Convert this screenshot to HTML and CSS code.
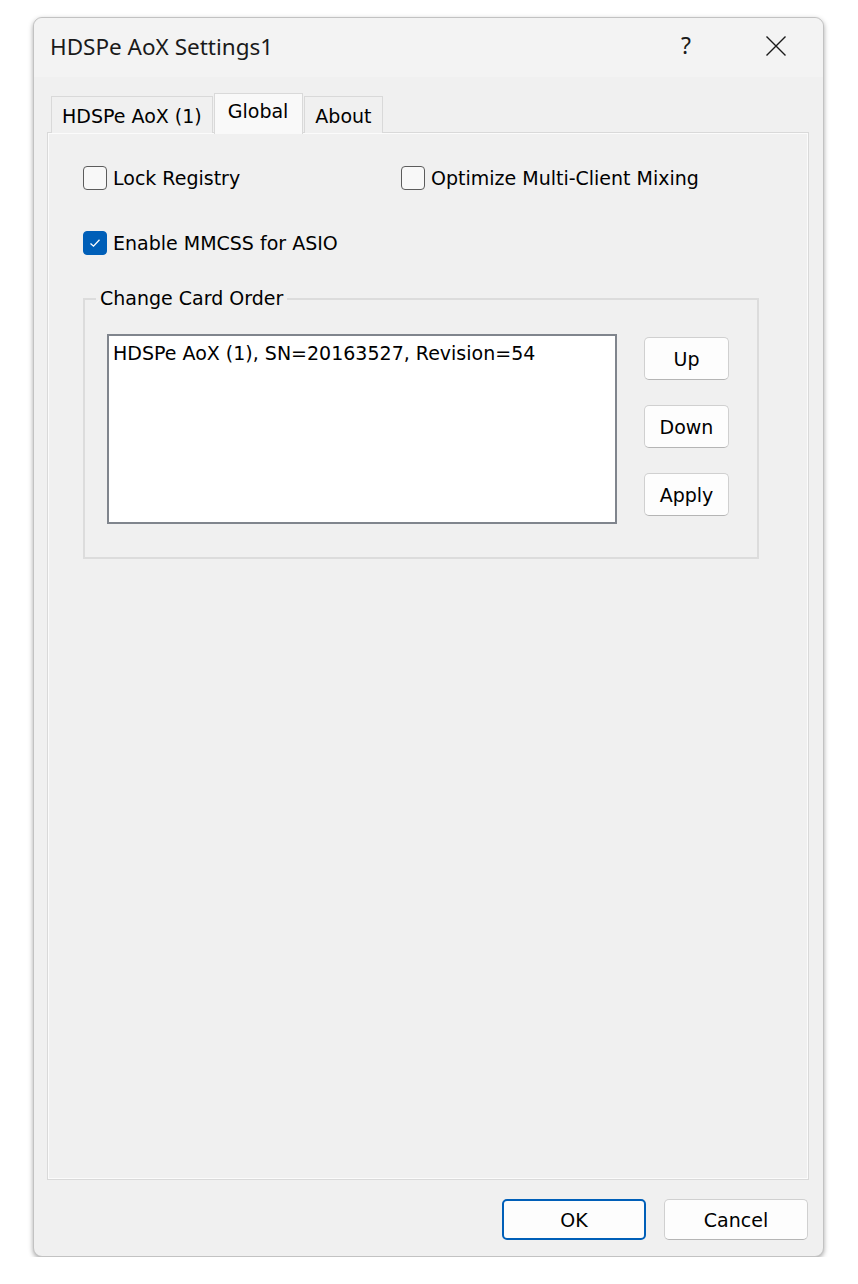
FILE: index.html
```html
<!DOCTYPE html>
<html>
<head>
<meta charset="utf-8">
<title>HDSPe AoX Settings1</title>
<link rel="stylesheet" href="styles.css">
</head>
<body>
<div class="window">
  <div class="titlebar">
    <span class="title">HDSPe AoX Settings1</span>
    <span class="help">?</span>
    <span class="close">
      <svg width="22" height="22" viewBox="0 0 22 22"><path d="M1.5 1.5 L20.5 20.5 M20.5 1.5 L1.5 20.5" stroke="#1a1a1a" stroke-width="1.4" fill="none"/></svg>
    </span>
  </div>
  <div class="content">
    <div class="tabs">
      <div class="tab">HDSPe AoX (1)</div>
      <div class="tab active">Global</div>
      <div class="tab">About</div>
    </div>
    <div class="panel">
      <div class="row row1">
        <label class="check col1"><span class="box"></span><span>Lock Registry</span></label>
        <label class="check"><span class="box"></span><span>Optimize Multi-Client Mixing</span></label>
      </div>
      <div class="row row2">
        <label class="check"><span class="box checked"><svg width="14" height="14" viewBox="0 0 14 14"><path d="M2.5 7.5 L5.5 10.2 L11.5 3.8" stroke="#fff" stroke-width="1.3" fill="none"/></svg></span><span>Enable MMCSS for ASIO</span></label>
      </div>
      <div class="group">
        <span class="legend">Change Card Order</span>
        <div class="group-body">
          <div class="listbox"><div class="item">HDSPe AoX (1), SN=20163527, Revision=54</div></div>
          <div class="side-buttons">
            <button class="btn small">Up</button>
            <button class="btn small">Down</button>
            <button class="btn small">Apply</button>
          </div>
        </div>
      </div>
    </div>
  </div>
  <div class="footer">
    <button class="btn wide default">OK</button>
    <button class="btn wide">Cancel</button>
  </div>
</div>
</body>
</html>
```
FILE: styles.css
```css
html, body {
  margin: 0;
  padding: 0;
  background: #ffffff;
}
body {
  font-family: "DejaVu Sans", "Liberation Sans", sans-serif;
  font-size: 19px;
  color: #000;
}
.window {
  margin: 17px 0 0 33px;
  width: 791px;
  height: 1240px;
  box-sizing: border-box;
  border: 1px solid #c2c2c2;
  border-radius: 9px;
  box-shadow: 0 2px 5px rgba(0,0,0,0.35);
  background: #f0f0f0;
  display: flex;
  flex-direction: column;
}
.titlebar {
  height: 59px;
  flex: none;
  display: flex;
  align-items: center;
  padding-left: 16px;
  background: #f3f3f3;
  border-radius: 9px 9px 0 0;
}
.title {
  font-family: "Noto Sans", "Open Sans", sans-serif;
  font-size: 22.5px;
  color: #1a1a1a;
  flex: 1;
  margin-top: -2px;
}
.help {
  font-family: "Noto Sans", sans-serif;
  font-size: 23px;
  color: #1a1a1a;
  margin-right: 74px;
  margin-top: -6px;
}
.close {
  display: flex;
  margin-right: 36px;
  margin-top: -4px;
}
.content {
  flex: 1;
  display: flex;
  flex-direction: column;
  padding: 16px 14px 0 13px;
}
.tabs {
  display: flex;
  align-items: flex-end;
  padding-left: 4px;
  height: 40px;
  position: relative;
  z-index: 1;
  margin-bottom: -1px;
}
.tab {
  height: 37px;
  box-sizing: border-box;
  border: 1px solid #d9d9d9;
  border-bottom: none;
  background: #f0f0f0;
  padding: 0 10px 0 10px;
  display: flex;
  align-items: center;
  padding-top: 2px;
  color: #000;
}
.tab + .tab { margin-left: 1px; }
.tab.active {
  height: 41px;
  background: #f9f9f9;
  padding-top: 0;
  padding-bottom: 6px;
  padding-left: 13px;
  padding-right: 14px;
  margin-bottom: -1px;
}
.panel {
  flex: 1;
  border: 1px solid #d9d9d9;
  box-shadow: inset 1px 1px 0 #fbfbfb, inset -1px -1px 0 #fbfbfb;
  background: #f0f0f0;
  padding: 32px 50px 0 35px;
  display: flex;
  flex-direction: column;
}
.row {
  display: flex;
  height: 24px;
  align-items: center;
}
.row1 { margin-top: 1px; }
.row2 { margin-top: 41px; }
.check {
  display: flex;
  align-items: center;
  gap: 6px;
  color: #000;
}
.col1 { width: 318px; }
.box {
  width: 24px;
  height: 24px;
  box-sizing: border-box;
  border: 1.5px solid #5c5c5c;
  border-radius: 4px;
  background: #f8f8f8;
  display: flex;
  align-items: center;
  justify-content: center;
}
.box.checked {
  background: #005fb8;
  border-color: #005fb8;
}
.group {
  margin-top: 43px;
  width: 676px;
  height: 261px;
  box-sizing: border-box;
  border: 2px solid #dcdcdc;
  display: flex;
  flex-direction: column;
}
.legend {
  align-self: flex-start;
  margin-top: -13px;
  margin-left: 11px;
  padding: 0 4px;
  background: #f0f0f0;
  line-height: 22px;
  color: #000;
}
.group-body {
  display: flex;
  padding: 25px 0 0 22px;
}
.listbox {
  width: 510px;
  height: 190px;
  box-sizing: border-box;
  border: 2px solid #80858d;
  background: #ffffff;
  padding: 5px 4px;
}
.item { line-height: 24px; }
.side-buttons {
  display: flex;
  flex-direction: column;
  gap: 25px;
  margin-left: 27px;
  padding-top: 3px;
}
.btn {
  font-family: "DejaVu Sans", "Liberation Sans", sans-serif;
  font-size: 19px;
  color: #000;
  background: #fdfdfd;
  border: 1px solid #d0d0d0;
  border-bottom-color: #b5b5b5;
  border-radius: 5px;
  box-sizing: border-box;
  padding: 0;
  margin: 0;
}
.btn.small {
  width: 85px;
  height: 43px;
}
.footer {
  flex: none;
  display: flex;
  justify-content: flex-end;
  gap: 18px;
  padding: 19px 15px 16px 0;
}
.btn.wide {
  width: 144px;
  height: 41px;
}
.btn.default {
  border: 2px solid #005fb8;
}
```
